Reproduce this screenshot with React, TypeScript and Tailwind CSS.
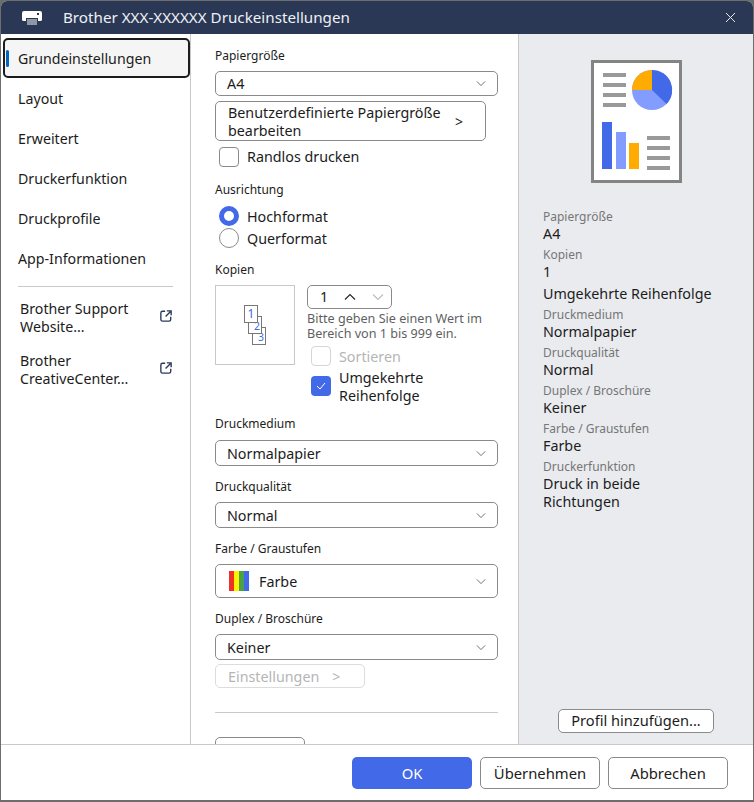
import React from "react";

const font = { fontFamily: '"Noto Sans", sans-serif' };

function Chevron({ color = "#555", up = false, w = 12, h = 8 }: { color?: string; up?: boolean; w?: number; h?: number }) {
  return (
    <svg width={w} height={h} viewBox="0 0 12 8" fill="none" className="shrink-0">
      <path d={up ? "M1 6.5 L6 1.5 L11 6.5" : "M1 1.5 L6 6.5 L11 1.5"} stroke={color} strokeWidth="1.1" />
    </svg>
  );
}

function Label({ children, className = "" }: { children: React.ReactNode; className?: string }) {
  return <div className={`text-[12px] leading-[16px] text-[#1c1c1c] h-[16px] ${className}`}>{children}</div>;
}

function Select({ value, h = "h-[26px]", icon = false }: { value: string; h?: string; icon?: boolean }) {
  return (
    <div className={`w-[283px] ${h} rounded-[5px] border border-[#8a8a8a] flex items-center pl-[11px] pr-[11px] bg-white`}>
      {icon && (
        <div className="flex w-[20px] h-[20px] mr-[10px] ml-[2px]">
          <div className="flex-1 bg-[#ee3124]" />
          <div className="flex-1 bg-[#fff200]" />
          <div className="flex-1 bg-[#4ba147]" />
          <div className="flex-1 bg-[#4169e8]" />
        </div>
      )}
      <span className="flex-1 pt-[1px] text-[14.3px] leading-[20px] text-[#1c1c1c]">{value}</span>
      <Chevron w={10} h={7} color="#666" />
    </div>
  );
}

function NavItem({ label, active = false }: { label: string; active?: boolean }) {
  return (
    <div
      className={
        active
          ? "relative h-[40px] w-[187px] ml-[2px] rounded-[5px] border-2 border-[#1c1c1c] bg-[#f5f5f5] flex items-center pl-[13px] pt-[1px] text-[14.2px] text-[#1c1c1c]"
          : "h-[40px] flex items-center pl-[17px] pt-[1px] text-[14.2px] text-[#1c1c1c]"
      }
    >
      {active && <div className="absolute left-[1px] top-[10px] w-[3px] h-[17px] rounded-[2px] bg-[#0067c0]" />}
      {label}
    </div>
  );
}

function ExternalIcon() {
  return (
    <svg width="12" height="12" viewBox="0 0 14 14" fill="none" className="shrink-0 mb-[2px]">
      <path d="M6 1.5 H3 Q1 1.5 1 3.5 V11 Q1 13 3 13 H10.5 Q12.5 13 12.5 11 V8" stroke="#2b3a5a" strokeWidth="1.6" />
      <path d="M6.5 7.5 L12 2 M8 1 H13 V6" stroke="#2b3a5a" strokeWidth="1.6" />
    </svg>
  );
}

function LinkItem({ a, b }: { a: string; b: string }) {
  return (
    <div className="h-[52px] flex items-center pl-[19px] pr-[18px]">
      <div className="flex-1 pt-[2px] text-[14.2px] leading-[18px] text-[#1c1c1c]">
        {a}
        <br />
        {b}
      </div>
      <ExternalIcon />
    </div>
  );
}

function Info({ label, value }: { label: string; value: React.ReactNode }) {
  return (
    <div>
      <div className="text-[12px] leading-[15px] text-[#767676]">{label}</div>
      <div className="text-[14.3px] leading-[18px] text-[#1c1c1c] pt-[1px] mb-[4px]">{value}</div>
    </div>
  );
}

function PreviewDoc() {
  return (
    <svg width="91" height="123" viewBox="0 0 91 123">
      <rect x="1.5" y="1.5" width="88" height="120" fill="#fff" stroke="#848484" strokeWidth="3" />
      {[13, 23, 33, 43].map((y) => (
        <rect key={y} x="12" y={y} width="23" height="4" fill="#999" />
      ))}
      {[76, 86, 96, 106].map((y) => (
        <rect key={y} x="56" y={y} width="23" height="4" fill="#999" />
      ))}
      <rect x="11" y="62" width="10" height="47" fill="#4169e8" />
      <rect x="25" y="72" width="10" height="37" fill="#829dff" />
      <rect x="38" y="83" width="10" height="26" fill="#ffab00" />
      <circle cx="61" cy="30" r="20" fill="#829dff" />
      <path d="M61 30 V10 A20 20 0 0 1 75.5 44 Z" fill="#4169e8" />
      <path d="M61 30 H41 A20 20 0 0 1 61 10 Z" fill="#ffab00" />
    </svg>
  );
}

function CopiesIcon() {
  return (
    <div className="w-[80px] h-[80px] border border-[#c8c8c8] relative shrink-0">
      <div className="absolute left-[36px] top-[41px] w-[14px] h-[18px] border border-[#777] bg-white text-[#4169e8] text-[10.5px] leading-[14px] flex items-end justify-end pr-[1px]">3</div>
      <div className="absolute left-[32px] top-[30px] w-[14px] h-[18px] border border-[#777] bg-white text-[#4169e8] text-[10.5px] leading-[14px] flex items-end justify-end pr-[1px]">2</div>
      <div className="absolute left-[28px] top-[19px] w-[14px] h-[18px] border border-[#777] bg-white text-[#4169e8] text-[12px] leading-[14px] flex items-center justify-center">1</div>
    </div>
  );
}

export default function App() {
  return (
    <div style={font} className="w-[754px] h-[802px] bg-[#6d6d6d] pl-[1px] pr-[1px] pt-[1px] pb-[2px]">
      <div className="w-full h-full flex flex-col rounded-t-[6px] overflow-hidden bg-white">
        <div className="h-[33px] shrink-0 bg-[#2a3855] flex items-center pl-[21px] pr-[17px] text-white">
          <svg width="20" height="16" viewBox="0 0 20 16" className="mr-[21px] shrink-0">
            <path d="M0 3 Q0 1 2 1 H18 Q20 1 20 3 V10 Q20 11 18 11 H16 V8 H4 V11 H2 Q0 11 0 10 Z" fill="#fff" />
            <rect x="5" y="9" width="10" height="6" fill="#8f97a8" />
            <rect x="15" y="3" width="2" height="2" fill="#2a3855" />
          </svg>
          <span className="flex-1 text-[15.2px] text-[#eef0f4]">Brother XXX-XXXXXX Druckeinstellungen</span>
          <svg width="11" height="11" viewBox="0 0 11 11">
            <path d="M1 1 L10 10 M10 1 L1 10" stroke="#e8e8e8" strokeWidth="1" />
          </svg>
        </div>

        <div className="flex-1 flex min-h-0">
          <aside className="w-[190px] shrink-0 border-r border-[#c9c9c9] pt-[4px]">
            <NavItem label="Grundeinstellungen" active />
            <NavItem label="Layout" />
            <NavItem label="Erweitert" />
            <NavItem label="Druckerfunktion" />
            <NavItem label="Druckprofile" />
            <NavItem label="App-Informationen" />
            <div className="h-px bg-[#c9c9c9] mx-[17px] mt-[8px] mb-[4px]" />
            <LinkItem a="Brother Support" b="Website..." />
            <LinkItem a="Brother" b="CreativeCenter..." />
          </aside>

          <main className="w-[328px] shrink-0 overflow-hidden border-r border-[#c9c9c9] pl-[24px] pt-[14px]">
            <Label>Papiergröße</Label>
            <div className="mt-[7px]">
              <Select value="A4" h="h-[25px]" />
            </div>
            <div className="mt-[5px] w-[271px] h-[40px] rounded-[5px] border border-[#8a8a8a] pl-[12px] pr-[22px] pt-[1px] flex items-center text-[14.3px] leading-[18px] text-[#1c1c1c]">
              <span className="flex-1">Benutzerdefinierte Papiergröße bearbeiten</span>
              <span className="text-[14px]">&gt;</span>
            </div>
            <div className="mt-[6px] ml-[4px] flex items-center h-[20px]">
              <div className="w-[20px] h-[20px] rounded-[4px] border border-[#8a8a8a] mr-[8px]" />
              <span className="text-[14.3px] text-[#1c1c1c]">Randlos drucken</span>
            </div>

            <Label className="mt-[15px]">Ausrichtung</Label>
            <div className="mt-[8px] ml-[4px] flex items-center h-[20px]">
              <div className="w-[20px] h-[20px] rounded-full border-[5px] border-[#4169e8] bg-white mr-[8px]" />
              <span className="pt-[1px] text-[14.3px] text-[#1c1c1c]">Hochformat</span>
            </div>
            <div className="mt-[2px] ml-[4px] flex items-center h-[20px]">
              <div className="w-[20px] h-[20px] rounded-full border border-[#8a8a8a] mr-[8px]" />
              <span className="pt-[1px] text-[14.3px] text-[#1c1c1c]">Querformat</span>
            </div>

            <Label className="mt-[14px]">Kopien</Label>
            <div className="mt-[7px] flex">
              <CopiesIcon />
              <div className="ml-[12px]">
                <div className="w-[85px] h-[24px] rounded-[5px] border border-[#8a8a8a] flex items-center pl-[12px] text-[14.3px] text-[#1c1c1c]">
                  <span className="w-[24px]">1</span>
                  <Chevron color="#222" up />
                  <span className="w-[16px]" />
                  <Chevron color="#bbb" />
                </div>
                <div className="mt-[2px] w-[190px] text-[12.6px] leading-[15px] text-[#5f5f5f]">
                  Bitte geben Sie einen Wert im Bereich von 1 bis 999 ein.
                </div>
                <div className="mt-[5px] ml-[4px] flex items-center h-[20px]">
                  <div className="w-[20px] h-[20px] rounded-[4px] border border-[#d5d5d5] mr-[8px]" />
                  <span className="pt-[1px] text-[14.3px] text-[#b5b5b5]">Sortieren</span>
                </div>
                <div className="mt-[3px] ml-[4px] flex items-center">
                  <div className="w-[20px] h-[20px] mb-[2px] rounded-[4px] bg-[#4169e8] mr-[8px] flex items-center justify-center shrink-0">
                    <svg width="10" height="8" viewBox="0 0 10 8" fill="none">
                      <path d="M1 4 L4 7 L9 1" stroke="#fff" strokeWidth="1" />
                    </svg>
                  </div>
                  <span className="text-[14.3px] leading-[18px] text-[#1c1c1c]">
                    Umgekehrte
                    <br />
                    Reihenfolge
                  </span>
                </div>
              </div>
            </div>

            <Label className="mt-[11px]">Druckmedium</Label>
            <div className="mt-[8px]">
              <Select value="Normalpapier" />
            </div>
            <Label className="mt-[13px]">Druckqualität</Label>
            <div className="mt-[7px]">
              <Select value="Normal" />
            </div>
            <Label className="mt-[13px]">Farbe / Graustufen</Label>
            <div className="mt-[7px]">
              <Select value="Farbe" h="h-[34px]" icon />
            </div>
            <Label className="mt-[13px]">Duplex / Broschüre</Label>
            <div className="mt-[7px]">
              <Select value="Keiner" />
            </div>
            <div className="mt-[4px] w-[150px] h-[24px] rounded-[5px] border border-[#dcdcdc] pl-[12px] pt-[1px] flex items-center text-[14.3px] text-[#b5b5b5]">
              <span className="mr-[13px]">Einstellungen</span>
              <span className="text-[14px]">&gt;</span>
            </div>
            <div className="mt-[24px] w-[283px] h-px bg-[#c9c9c9]" />
            <div className="mt-[24px] w-[90px] h-[24px] rounded-[5px] border border-[#8a8a8a]" />
          </main>

          <section className="flex-1 bg-[#e9ebef] flex flex-col px-[24px] pt-[26px]">
            <div className="ml-[48px]">
              <PreviewDoc />
            </div>
            <div className="mt-[26px]">
              <Info label="Papiergröße" value="A4" />
              <Info label="Kopien" value="1" />
              <div className="text-[14.3px] leading-[18px] text-[#1c1c1c] mb-[4px]">Umgekehrte Reihenfolge</div>
              <Info label="Druckmedium" value="Normalpapier" />
              <Info label="Druckqualität" value="Normal" />
              <Info label="Duplex / Broschüre" value="Keiner" />
              <Info label="Farbe / Graustufen" value="Farbe" />
              <Info label="Druckerfunktion" value={<>Druck in beide<br />Richtungen</>} />
            </div>
            <div className="mt-auto mb-[11px] self-end mr-[15px]">
              <div className="w-[156px] h-[24px] rounded-[5px] border border-[#8a8a8a] bg-white flex items-center justify-center text-[14.6px] text-[#1c1c1c]">
                Profil hinzufügen...
              </div>
            </div>
          </section>
        </div>

        <footer className="h-[56px] shrink-0 border-t border-[#c9c9c9] flex items-start pt-[12px] pl-[351px] gap-[8px] bg-white">
          <div className="w-[120px] h-[32px] rounded-[5px] bg-[#4169e8] pt-[1px] flex items-center justify-center text-[14.8px] text-white">OK</div>
          <div className="w-[120px] h-[32px] rounded-[5px] border border-[#8a8a8a] pt-[1px] flex items-center justify-center text-[14.8px] text-[#1c1c1c]">Übernehmen</div>
          <div className="w-[120px] h-[32px] rounded-[5px] border border-[#8a8a8a] pt-[1px] flex items-center justify-center text-[14.8px] text-[#1c1c1c]">Abbrechen</div>
        </footer>
      </div>
    </div>
  );
}
